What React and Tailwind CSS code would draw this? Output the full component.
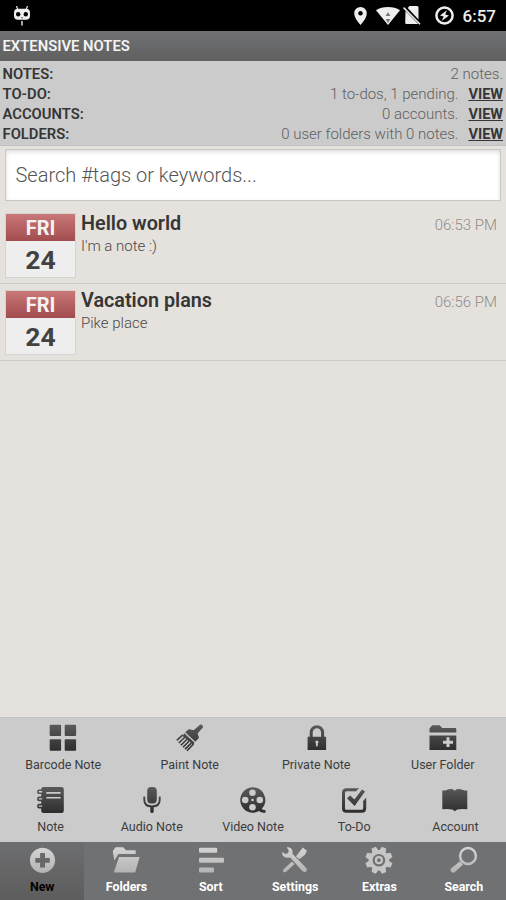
const STATS = [
  { label: 'NOTES:', text: '2 notes.' },
  { label: 'TO-DO:', text: '1 to-dos, 1 pending.', view: true },
  { label: 'ACCOUNTS:', text: '0 accounts.', view: true },
  { label: 'FOLDERS:', text: '0 user folders with 0 notes.', view: true },
];

const NOTES = [
  { day: 'FRI', date: 24, title: 'Hello world', body: "I'm a note :)", time: '06:53 PM' },
  { day: 'FRI', date: 24, title: 'Vacation plans', body: 'Pike place', time: '06:56 PM' },
];

// gradient ids are shared by every icon on the page
function Gradients() {
  return (
    <svg className="absolute w-0 h-0">
      <defs>
        <linearGradient id="dark" gradientUnits="userSpaceOnUse" x1="0" y1="0" x2="0" y2="28">
          <stop offset="0" stopColor="#5c5c5c" />
          <stop offset="1" stopColor="#2b2b2b" />
        </linearGradient>
        <linearGradient id="light" gradientUnits="userSpaceOnUse" x1="0" y1="0" x2="0" y2="28">
          <stop offset="0" stopColor="#d6d6d6" />
          <stop offset="1" stopColor="#b2b2b2" />
        </linearGradient>
      </defs>
    </svg>
  );
}

function Icon({ light, children }) {
  const paint = light ? 'url(#light)' : 'url(#dark)';
  return (
    <svg className="w-7 h-7 shrink-0" viewBox="0 0 28 28" fill={paint} stroke="none">
      {children}
    </svg>
  );
}

const BarcodeIcon = () => (
  <Icon>
    <rect x="0.7" y="0.7" width="11.4" height="11.2" rx="1" />
    <rect x="15.7" y="0.7" width="11.4" height="11.2" rx="1" />
    <rect x="0.7" y="15.3" width="11.4" height="11.5" rx="1" />
    <rect x="15.7" y="15.3" width="11.4" height="11.5" rx="1" />
  </Icon>
);

const PaintIcon = () => (
  <Icon>
    <path d="M24 .7c1.4-.8 3.600 1 2.900 2.700L21.800 9.300c-.6 1 1.600 3.300 1 4.700L19.300 17.800 9.200 8.300l3.400-3c1.500-.7 4.200 1.500 5.400.6z" />
    <path d="M8.200 9.200l10.300 9.600-1.200 1.600-2.200-1.200-1.300-2-1.700-.2-1.500-2.200-1.800-.5-2-2.400z" />
    <path
      d="M6.800 10.800L.8 16.400M9 13L2.800 19M11.200 15L4.900 21.200M13.300 17L7 23.200M15.400 19.100L9 25.200M17.600 20L11 26.700"
      stroke="url(#dark)"
      strokeWidth="1.6"
    />
  </Icon>
);

const LockIcon = () => (
  <Icon>
    <path d="M9.200 13V8.500a5.700 5.800 0 0 1 11.400 0V13" fill="none" stroke="url(#dark)" strokeWidth="3" />
    <path
      fillRule="evenodd"
      d="M5.600 12.800H24.100V26H5.600zM14.900 16.500a1.600 1.600 0 0 0-.9 2.900v2.900h1.800v-2.900a1.600 1.600 0 0 0-.9-2.900z"
    />
  </Icon>
);

const UserFolderIcon = () => (
  <Icon>
    <path d="M.5 8.500V4.600L3.200 1.300h7.300L13.200 4.100H26q1.300 0 1.300 1.300v3.100z" />
    <path fillRule="evenodd" d="M.5 11.600h26.800V26H.5zM17.500 13.300v3.400h-3.500v3h3.500v3.400h3v-3.400H24v-3h-3.500v-3.400z" />
  </Icon>
);

const NotebookIcon = () => (
  <Icon>
    <path
      fillRule="evenodd"
      d="M6.500 1H24.500q2.300 0 2.300 2.300V24.700q0 2.300-2.300 2.300H6.500q-2.300 0-2.300-2.300V3.300Q4.200 1 6.500 1zM9.300 6v1.700h14.300V6zM9.300 10.900v1.700h14.300v-1.700z"
    />
    <g fill="#cbcbcb" stroke="url(#dark)" strokeWidth="1.6">
      <rect x="1" y="4.2" width="5" height="3" rx=".8" />
      <rect x="1" y="11.4" width="5" height="3" rx=".8" />
      <rect x="1" y="18.6" width="5" height="3" rx=".8" />
    </g>
  </Icon>
);

const MicIcon = () => (
  <Icon>
    <rect x="9.2" y="1" width="9.6" height="16.4" rx="4" />
    <path
      d="M6.300 10.500v3.600q0 6.400 7.700 6.400t7.700-6.400v-3.600"
      fill="none"
      stroke="url(#dark)"
      strokeWidth="1.9"
    />
    <path d="M12.300 20h3.400v5.500q0 1.500-1.700 1.500t-1.700-1.500z" />
  </Icon>
);

const FilmIcon = () => (
  <Icon>
    <path d="M13.500 1.300a12.700 12.700 0 0 1 9.300 21.400q1 1.500 3.700 1.300v2.700q-4.500.6-6.400-1.600A12.700 12.700 0 1 1 13.500 1.300z" />
    <g fill="#cbcbcb">
      <circle cx="13.5" cy="6.7" r="3.3" />
      <circle cx="6.2" cy="14" r="3.3" />
      <circle cx="20.8" cy="14" r="3.3" />
      <circle cx="13.5" cy="21.3" r="3.3" />
      <circle cx="13.5" cy="14" r="1.3" />
    </g>
  </Icon>
);

const TodoIcon = () => (
  <Icon>
    <path
      d="M14 3.700H6.500q-3 0-3 3V22.200q0 3 3 3H21.700q3 0 3-3V15"
      fill="none"
      stroke="url(#dark)"
      strokeWidth="3"
    />
    <path d="M13.500 2.200h5.500l-3 3H13.500zM26.200 11.500v5h-3v-1.500z" />
    <path d="M7 12.300l3.200-2.800 4.200 4L22 3.500l3 2L14.600 20z" />
  </Icon>
);

const AccountIcon = () => (
  <Icon>
    <path d="M1.300 4.400Q3.500 4.900 5.500 3.900T10.500 2.900Q12.500 3.100 13.800 4.700Q15.100 3.100 17.100 2.900Q19.600 2.900 22.100 3.900T26.300 4.400V23.300Q20.500 22.600 16.500 23.400Q14.600 23.700 13.800 25.500Q13 23.700 11.100 23.400Q7.100 22.600 1.300 23.300z" />
  </Icon>
);

const NewIcon = () => (
  <Icon light>
    <path
      fillRule="evenodd"
      d="M14.500 1.700a12.600 12.600 0 1 0 .01 0zM12.100 7h4.900v4.900h4.800v4.900H17v4.800h-4.900v-4.800H7.300v-4.900h4.800z"
    />
  </Icon>
);

const FoldersIcon = () => (
  <Icon light>
    <path d="M.7 5.200L3.500 1.300h7.700l2.800 3h9.700v3.600H6.400L2.400 14.500z" />
    <path d="M7 11h20.600l-4.400 15.500H1.800z" />
  </Icon>
);

const SortIcon = () => (
  <Icon light>
    <rect x="2" y="1.8" width="18.2" height="5" rx="1" />
    <rect x="2" y="11.7" width="25" height="5" rx="1" />
    <rect x="2" y="21.5" width="15" height="5" rx="1" />
  </Icon>
);

const SettingsIcon = () => (
  <Icon light>
    <path d="M5.800 1.400Q10.600 1 11.600 5.500l-.2 2.300L23.800 20.600q2.500 2 1.900 4.300-1.800 2.300-4.400 0L9.200 11.400Q4 12.900 1.600 9.600L1 6l3.600 2.100 2.700-1.200.4-2.600z" />
    <path d="M21.800 1.500L25.900 4.700 24.200 8.500 18.300 13.300 14.900 10.500z" />
    <path d="M11 15.600l2.500 2.500-8.600 8-2.900.2.400-2.800z" />
  </Icon>
);

const GearIcon = () => (
  <Icon light>
    <g transform="translate(13.9 14.2)">
      {[0, 45, 90, 135, 180, 225, 270, 315].map((a) => (
        <path key={a} d="M-3.400-9L-2.300-13.600H2.300L3.400-9z" fill="#c6c6c6" transform={`rotate(${a + 22.5})`} />
      ))}
      <circle r="8.3" fill="none" stroke="#c6c6c6" strokeWidth="4" />
      <circle r="3" fill="none" stroke="#c6c6c6" strokeWidth="2.2" />
    </g>
  </Icon>
);

const SearchIcon = () => (
  <Icon light>
    <circle cx="18" cy="10" r="7.9" fill="none" stroke="url(#light)" strokeWidth="2.5" />
    <path d="M9.900 15.200l3.300 3.300-8.900 8q-1.700.5-3-.8t-.6-2.900z" />
  </Icon>
);

const CREATE_TOP = [
  { label: 'Barcode Note', icon: BarcodeIcon },
  { label: 'Paint Note', icon: PaintIcon },
  { label: 'Private Note', icon: LockIcon },
  { label: 'User Folder', icon: UserFolderIcon },
];

const CREATE_BOTTOM = [
  { label: 'Note', icon: NotebookIcon },
  { label: 'Audio Note', icon: MicIcon },
  { label: 'Video Note', icon: FilmIcon },
  { label: 'To-Do', icon: TodoIcon },
  { label: 'Account', icon: AccountIcon },
];

const TABS = [
  { label: 'New', icon: NewIcon, active: true },
  { label: 'Folders', icon: FoldersIcon },
  { label: 'Sort', icon: SortIcon },
  { label: 'Settings', icon: SettingsIcon },
  { label: 'Extras', icon: GearIcon },
  { label: 'Search', icon: SearchIcon },
];

function StatusBar() {
  return (
    <div className="flex h-[31px] shrink-0 items-center bg-black pl-[14px] pr-[10px]">
      <svg className="h-5 w-4" viewBox="0 0 16 20">
        <path d="M2.500 0l1.500 4M13.500 0L12 4" stroke="#eee" strokeWidth="1.2" />
        <rect x="0" y="2.8" width="16" height="11" rx="4" fill="#eee" />
        <circle cx="4.2" cy="8.3" r="2.2" fill="#000" />
        <circle cx="11.8" cy="8.3" r="2.2" fill="#000" />
        <path d="M7 11.800h2" stroke="#555" />
        <path d="M8 15v4.500" stroke="#ddd" strokeWidth="1.5" />
      </svg>
      <div className="ml-auto flex items-center">
        <svg className="h-[18px] w-[13px]" viewBox="0 0 13 18">
          <path
            fillRule="evenodd"
            fill="#eee"
            d="M6.500 0A6.300 6.300 0 0 1 12.800 6.300Q12.800 11 6.500 18 .2 11 .2 6.300A6.300 6.300 0 0 1 6.500 0zM6.500 4a2.300 2.300 0 1 0 .01 0z"
          />
        </svg>
        <svg className="ml-[9px] h-[18px] w-6" viewBox="0 0 24 18">
          <path d="M12 18L0 3.200Q5 0 12 0t12 3.200z" fill="#eee" />
          <path d="M12 5l2.300 4H9.700zM12 16l2.300-4H9.700z" fill="#777" />
        </svg>
        <svg className="ml-[3px] h-[19px] w-[18px]" viewBox="0 0 18 19">
          <path d="M6.500 0H14q1.500 0 1.500 1.500v12L4.700 2zM2.500 5l12.700 13H3.500q-1.300 0-1.300-1.300z" fill="#eee" />
          <path d="M.6 1.600L17 18.200" stroke="#eee" strokeWidth="1.5" />
        </svg>
        <svg className="ml-[14px] h-[19px] w-[19px]" viewBox="0 0 19 19">
          <circle cx="9.5" cy="9.5" r="8.1" fill="none" stroke="#eee" strokeWidth="2.5" />
          <path d="M11.800 4.200L5 9.500l3.700 1.100-2 4.400 7.300-5.400-3.800-1z" fill="#eee" />
        </svg>
        <span className="ml-[9px] pt-px text-[17px] leading-none font-medium text-[#eee]">6:57</span>
      </div>
    </div>
  );
}

function StatRow({ stat }) {
  return (
    <div className="flex h-5 items-baseline text-[14.8px] leading-5">
      <span className="font-semibold text-[#363636]">{stat.label}</span>
      <span className="ml-auto text-[15px] font-light text-[#606060]">{stat.text}</span>
      {stat.view && <span className="ml-[10px] text-[14.5px] font-bold text-[#363636] underline">VIEW</span>}
    </div>
  );
}

function NoteRow({ note }) {
  return (
    <div className="flex h-[77px] border-b border-[#d0cdc9] pl-[5px] pr-[9px] pt-[6px]">
      <div className="h-[65px] w-[71px] shrink-0 border border-[#d6d4d2] bg-[#eee] text-center font-bold">
        <div className="h-[27px] bg-linear-to-b from-[#c97777] to-[#a24c4f] text-[20px] leading-[29px] text-[#f6f2f2]">
          {note.day}
        </div>
        <div className="text-[26.5px] leading-[37px] text-[#424242]">{note.date}</div>
      </div>
      <div className="ml-[5px] flex-1">
        <div className="text-[19.8px] leading-[22px] font-semibold text-[#363636]">{note.title}</div>
        <div className="text-[15px] leading-[22px] font-light text-[#484848]">{note.body}</div>
      </div>
      <div className="text-[15px] leading-[25px] font-light text-[#8e8c89]">{note.time}</div>
    </div>
  );
}

function CreateItem({ item }) {
  const ItemIcon = item.icon;
  return (
    <div className="flex flex-1 flex-col items-center">
      <ItemIcon />
      <span className="mt-[5px] text-[12.5px] leading-4 text-[#3c3c3c]">{item.label}</span>
    </div>
  );
}

function Tab({ tab }) {
  const TabIcon = tab.icon;
  return (
    <div
      className={`flex flex-1 flex-col items-center pt-[4px] ${
        tab.active ? 'bg-linear-to-b from-[#6d6e70] to-[#5d5d5d] text-black' : 'text-white'
      }`}
    >
      <TabIcon />
      <span className="mt-[5px] text-[12.4px] leading-4 font-bold">{tab.label}</span>
    </div>
  );
}

export default function App() {
  return (
    <div className="flex h-[900px] w-[506px] flex-col overflow-hidden bg-[#e5e2dd] font-['Roboto',sans-serif]">
      <Gradients />
      <StatusBar />
      <div className="h-[30px] shrink-0 bg-linear-to-b from-[#707173] to-[#606060] pl-[2.5px] text-[14.8px] leading-[31px] font-semibold text-[#f4f4f4]">
        EXTENSIVE NOTES
      </div>
      <div className="h-[85px] shrink-0 border-b border-[#c0c0c0] bg-[#cbcbcb] pl-[2.5px] pr-[3px] pt-[3px]">
        {STATS.map((s) => (
          <StatRow key={s.label} stat={s} />
        ))}
      </div>
      <div className="mx-[5px] mt-[3px] flex h-[52px] shrink-0 items-center border border-[#c9c7c4] bg-white pl-[9.5px] text-[20px] font-light text-[#555] shadow-[inset_0_2px_4px_#dddddd]">
        Search #tags or keywords...
      </div>
      <div className="mt-[6px] flex-1">
        {NOTES.map((n) => (
          <NoteRow key={n.title} note={n} />
        ))}
      </div>
      <div className="h-[125px] shrink-0 border-t border-[#c3c3c3] bg-[#cbcbcb] pt-[6px]">
        <div className="flex h-[62px]">
          {CREATE_TOP.map((item) => (
            <CreateItem key={item.label} item={item} />
          ))}
        </div>
        <div className="flex">
          {CREATE_BOTTOM.map((item) => (
            <CreateItem key={item.label} item={item} />
          ))}
        </div>
      </div>
      <div className="flex h-[58px] shrink-0 bg-[#707173]">
        {TABS.map((tab) => (
          <Tab key={tab.label} tab={tab} />
        ))}
      </div>
    </div>
  );
}
